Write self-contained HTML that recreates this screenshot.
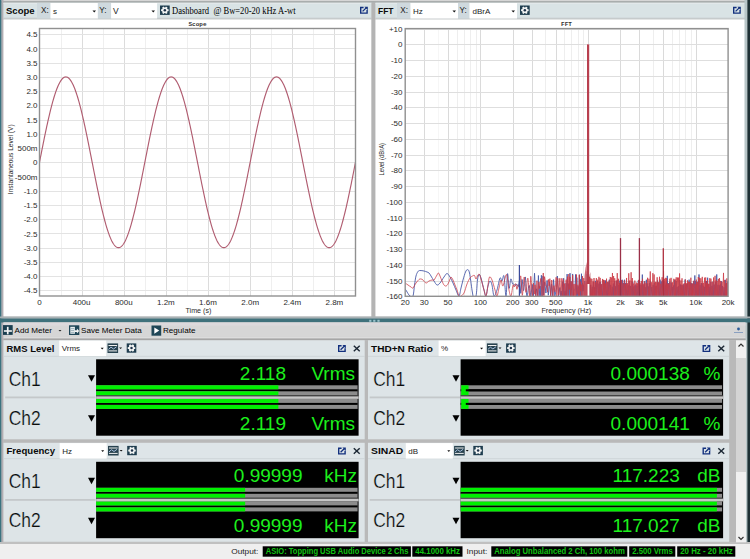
<!DOCTYPE html>
<html><head><meta charset="utf-8"><style>
html,body{margin:0;padding:0;width:750px;height:559px;overflow:hidden;background:#c9c9c9;}
svg{display:block;font-family:"Liberation Sans", sans-serif;}
</style></head><body>
<svg width="750" height="559" viewBox="0 0 750 559">
<rect x="0" y="0" width="750" height="559" fill="#c9c9c9" /><rect x="0" y="0" width="750" height="1" fill="#d6d6d6" /><rect x="0" y="1" width="750" height="1.8" fill="#a9adad" /><rect x="0" y="0" width="1.6" height="542" fill="#3b7380" /><rect x="1.6" y="0" width="1.9" height="542" fill="#b2acb2" /><rect x="3.5" y="2.8" width="368" height="15.7" fill="#d9e3e5" /><rect x="3.5" y="2.8" width="368" height="1.2" fill="#e2e8ea" /><rect x="3.5" y="17.7" width="368" height="1.8" fill="#c6cbcc" /><rect x="3.5" y="19.5" width="368" height="297" fill="#ffffff" /><rect x="371.5" y="3" width="4" height="314" fill="#b4b4b4" /><rect x="375.5" y="2.8" width="370" height="15.7" fill="#d9e3e5" /><rect x="375.5" y="2.8" width="370" height="1.2" fill="#e2e8ea" /><rect x="375.5" y="17.7" width="370" height="1.8" fill="#c6cbcc" /><rect x="375.5" y="19.5" width="370" height="297" fill="#ffffff" /><rect x="744.5" y="0" width="5.5" height="542" fill="#b8c6c8" /><rect x="747.4" y="0" width="2.6" height="542" fill="#1e3034" /><rect x="0" y="316.5" width="750" height="2" fill="#a9b1b4" /><rect x="0" y="318.5" width="750" height="4" fill="#3f717b" /><rect x="3.5" y="322.5" width="742" height="14" fill="#d6d6d6" /><rect x="3.5" y="322.5" width="742" height="3" fill="#dcd9dc" /><rect x="3.5" y="336.5" width="742" height="2" fill="#dcdcdc" /><rect x="3.5" y="338.5" width="742" height="1.8" fill="#a6a6a6" /><rect x="3.5" y="340.3" width="742" height="202" fill="#b9b9b9" /><rect x="0" y="544" width="750" height="15" fill="#efefef" /><rect x="0" y="542" width="750" height="2" fill="#c0c0c0" /><g font-family="Liberation Sans"><text x="6" y="14" font-size="9.4" fill="#0a0a0a" text-anchor="start" font-weight="bold" textLength="28.6" lengthAdjust="spacingAndGlyphs">Scope</text><rect x="37" y="3" width="13.5" height="15.5" fill="#cfd9de" /><text x="41" y="12.8" font-size="8.2" fill="#1a1a1a" text-anchor="start" font-weight="normal" >X:</text><rect x="50.5" y="3" width="47.5" height="15.5" fill="#ffffff" /><text x="53" y="14" font-size="8" fill="#222" text-anchor="start" font-weight="normal" >s</text><path d="M92.5 10.5 h3.5 l-1.75 2z" fill="#111"/><rect x="97.8" y="3" width="13.3" height="15.5" fill="#cfd9de" /><text x="99.3" y="12.8" font-size="8.2" fill="#1a1a1a" text-anchor="start" font-weight="normal" >Y:</text><rect x="111.1" y="3" width="46" height="15.5" fill="#ffffff" /><text x="113" y="14" font-size="8.5" fill="#222" text-anchor="start" font-weight="normal" >V</text><path d="M151.5 10.5 h3.5 l-1.75 2z" fill="#111"/></g><rect x="160" y="5.5" width="9.7" height="9.41" fill="#1f3d4f"/><circle cx="164.85" cy="10.20" r="2.81" fill="#f2f4f4"/><rect x="163.90" y="6.42" width="1.9" height="2" fill="#f2f4f4" transform="rotate(30 164.85 10.20)"/><rect x="163.90" y="6.42" width="1.9" height="2" fill="#f2f4f4" transform="rotate(90 164.85 10.20)"/><rect x="163.90" y="6.42" width="1.9" height="2" fill="#f2f4f4" transform="rotate(150 164.85 10.20)"/><rect x="163.90" y="6.42" width="1.9" height="2" fill="#f2f4f4" transform="rotate(210 164.85 10.20)"/><rect x="163.90" y="6.42" width="1.9" height="2" fill="#f2f4f4" transform="rotate(270 164.85 10.20)"/><rect x="163.90" y="6.42" width="1.9" height="2" fill="#f2f4f4" transform="rotate(330 164.85 10.20)"/><circle cx="164.85" cy="10.20" r="1.26" fill="#1c3048"/><text x="172" y="14" font-size="10" fill="#000" text-anchor="start" font-weight="normal" font-family="Liberation Serif" textLength="37" lengthAdjust="spacingAndGlyphs">Dashboard</text><text x="213.5" y="14" font-size="10" fill="#000" text-anchor="start" font-weight="normal" font-family="Liberation Serif" textLength="82" lengthAdjust="spacingAndGlyphs">@ Bw=20-20 kHz A-wt</text><path d="M363.6 7.5 H360.7 V13.1 H367.1 V10.0" fill="none" stroke="#12307e" stroke-width="1.4"/><path d="M362.6 11.399999999999999 L366.2 7.9" stroke="#12307e" stroke-width="1.3"/><path d="M364.4 6.8 H367.8 V10.2z" fill="#12307e"/><g font-family="Liberation Sans"><text x="378" y="14" font-size="9.4" fill="#0a0a0a" text-anchor="start" font-weight="bold" textLength="15.5" lengthAdjust="spacingAndGlyphs">FFT</text><rect x="397" y="3" width="13.5" height="15.5" fill="#cfd9de" /><text x="400.3" y="12.8" font-size="8.2" fill="#1a1a1a" text-anchor="start" font-weight="normal" >X:</text><rect x="410.5" y="3" width="47.5" height="15.5" fill="#ffffff" /><text x="413" y="14" font-size="8" fill="#222" text-anchor="start" font-weight="normal" >Hz</text><path d="M452.5 10.5 h3.5 l-1.75 2z" fill="#111"/><rect x="458" y="3" width="11.5" height="15.5" fill="#cfd9de" /><text x="459.5" y="12.8" font-size="8.2" fill="#1a1a1a" text-anchor="start" font-weight="normal" >Y:</text><rect x="469.5" y="3" width="47.5" height="15.5" fill="#ffffff" /><text x="472.5" y="14" font-size="8" fill="#222" text-anchor="start" font-weight="normal" >dBrA</text><path d="M511.5 10.5 h3.5 l-1.75 2z" fill="#111"/></g><rect x="520" y="5.5" width="9.7" height="9.41" fill="#1f3d4f"/><circle cx="524.85" cy="10.20" r="2.81" fill="#f2f4f4"/><rect x="523.90" y="6.42" width="1.9" height="2" fill="#f2f4f4" transform="rotate(30 524.85 10.20)"/><rect x="523.90" y="6.42" width="1.9" height="2" fill="#f2f4f4" transform="rotate(90 524.85 10.20)"/><rect x="523.90" y="6.42" width="1.9" height="2" fill="#f2f4f4" transform="rotate(150 524.85 10.20)"/><rect x="523.90" y="6.42" width="1.9" height="2" fill="#f2f4f4" transform="rotate(210 524.85 10.20)"/><rect x="523.90" y="6.42" width="1.9" height="2" fill="#f2f4f4" transform="rotate(270 524.85 10.20)"/><rect x="523.90" y="6.42" width="1.9" height="2" fill="#f2f4f4" transform="rotate(330 524.85 10.20)"/><circle cx="524.85" cy="10.20" r="1.26" fill="#1c3048"/><path d="M736.6 7.5 H733.7 V13.1 H740.1 V10.0" fill="none" stroke="#12307e" stroke-width="1.4"/><path d="M735.6 11.399999999999999 L739.2 7.9" stroke="#12307e" stroke-width="1.3"/><path d="M737.4 6.8 H740.8 V10.2z" fill="#12307e"/><g font-family="Liberation Sans" font-size="8" fill="#2a2a2a"><line x1="61.5" y1="28.5" x2="61.5" y2="296.0" stroke="#efefef" stroke-width="1"/><line x1="82.5" y1="28.5" x2="82.5" y2="296.0" stroke="#dcdcdc" stroke-width="1"/><line x1="103.5" y1="28.5" x2="103.5" y2="296.0" stroke="#efefef" stroke-width="1"/><line x1="124.5" y1="28.5" x2="124.5" y2="296.0" stroke="#dcdcdc" stroke-width="1"/><line x1="145.5" y1="28.5" x2="145.5" y2="296.0" stroke="#efefef" stroke-width="1"/><line x1="166.5" y1="28.5" x2="166.5" y2="296.0" stroke="#dcdcdc" stroke-width="1"/><line x1="187.5" y1="28.5" x2="187.5" y2="296.0" stroke="#efefef" stroke-width="1"/><line x1="208.5" y1="28.5" x2="208.5" y2="296.0" stroke="#dcdcdc" stroke-width="1"/><line x1="229.5" y1="28.5" x2="229.5" y2="296.0" stroke="#efefef" stroke-width="1"/><line x1="250.5" y1="28.5" x2="250.5" y2="296.0" stroke="#dcdcdc" stroke-width="1"/><line x1="271.5" y1="28.5" x2="271.5" y2="296.0" stroke="#efefef" stroke-width="1"/><line x1="292.5" y1="28.5" x2="292.5" y2="296.0" stroke="#dcdcdc" stroke-width="1"/><line x1="313.5" y1="28.5" x2="313.5" y2="296.0" stroke="#efefef" stroke-width="1"/><line x1="334.5" y1="28.5" x2="334.5" y2="296.0" stroke="#dcdcdc" stroke-width="1"/><line x1="39.5" y1="290.5" x2="355.5" y2="290.5" stroke="#e3e3e3" stroke-width="1"/><line x1="39.5" y1="276.5" x2="355.5" y2="276.5" stroke="#e3e3e3" stroke-width="1"/><line x1="39.5" y1="262.5" x2="355.5" y2="262.5" stroke="#e3e3e3" stroke-width="1"/><line x1="39.5" y1="248.5" x2="355.5" y2="248.5" stroke="#e3e3e3" stroke-width="1"/><line x1="39.5" y1="233.5" x2="355.5" y2="233.5" stroke="#e3e3e3" stroke-width="1"/><line x1="39.5" y1="219.5" x2="355.5" y2="219.5" stroke="#e3e3e3" stroke-width="1"/><line x1="39.5" y1="205.5" x2="355.5" y2="205.5" stroke="#e3e3e3" stroke-width="1"/><line x1="39.5" y1="191.5" x2="355.5" y2="191.5" stroke="#e3e3e3" stroke-width="1"/><line x1="39.5" y1="177.5" x2="355.5" y2="177.5" stroke="#e3e3e3" stroke-width="1"/><line x1="39.5" y1="162.5" x2="355.5" y2="162.5" stroke="#e3e3e3" stroke-width="1"/><line x1="39.5" y1="148.5" x2="355.5" y2="148.5" stroke="#e3e3e3" stroke-width="1"/><line x1="39.5" y1="134.5" x2="355.5" y2="134.5" stroke="#e3e3e3" stroke-width="1"/><line x1="39.5" y1="120.5" x2="355.5" y2="120.5" stroke="#e3e3e3" stroke-width="1"/><line x1="39.5" y1="105.5" x2="355.5" y2="105.5" stroke="#e3e3e3" stroke-width="1"/><line x1="39.5" y1="91.5" x2="355.5" y2="91.5" stroke="#e3e3e3" stroke-width="1"/><line x1="39.5" y1="77.5" x2="355.5" y2="77.5" stroke="#e3e3e3" stroke-width="1"/><line x1="39.5" y1="63.5" x2="355.5" y2="63.5" stroke="#e3e3e3" stroke-width="1"/><line x1="39.5" y1="48.5" x2="355.5" y2="48.5" stroke="#e3e3e3" stroke-width="1"/><line x1="39.5" y1="34.5" x2="355.5" y2="34.5" stroke="#e3e3e3" stroke-width="1"/><polyline points="39.50,162.30 40.03,159.62 40.55,156.94 41.08,154.27 41.61,151.60 42.13,148.94 42.66,146.30 43.19,143.67 43.71,141.07 44.24,138.48 44.77,135.92 45.29,133.38 45.82,130.87 46.35,128.39 46.87,125.95 47.40,123.54 47.93,121.17 48.45,118.84 48.98,116.55 49.51,114.31 50.03,112.11 50.56,109.97 51.09,107.88 51.61,105.84 52.14,103.85 52.67,101.93 53.19,100.06 53.72,98.26 54.25,96.51 54.77,94.84 55.30,93.23 55.83,91.68 56.35,90.21 56.88,88.81 57.41,87.48 57.93,86.23 58.46,85.05 58.99,83.94 59.51,82.92 60.04,81.97 60.57,81.10 61.09,80.31 61.62,79.60 62.15,78.98 62.67,78.43 63.20,77.97 63.73,77.59 64.25,77.30 64.78,77.09 65.31,76.96 65.83,76.92 66.36,76.96 66.89,77.09 67.41,77.30 67.94,77.59 68.47,77.97 68.99,78.43 69.52,78.98 70.05,79.60 70.57,80.31 71.10,81.10 71.63,81.97 72.15,82.92 72.68,83.94 73.21,85.05 73.73,86.23 74.26,87.48 74.79,88.81 75.31,90.21 75.84,91.68 76.37,93.23 76.89,94.84 77.42,96.51 77.95,98.26 78.47,100.06 79.00,101.93 79.53,103.85 80.05,105.84 80.58,107.88 81.11,109.97 81.63,112.11 82.16,114.31 82.69,116.55 83.21,118.84 83.74,121.17 84.27,123.54 84.79,125.95 85.32,128.39 85.85,130.87 86.37,133.38 86.90,135.92 87.43,138.48 87.95,141.07 88.48,143.67 89.01,146.30 89.53,148.94 90.06,151.60 90.59,154.27 91.11,156.94 91.64,159.62 92.16,162.30 92.69,164.98 93.22,167.66 93.74,170.33 94.27,173.00 94.80,175.66 95.32,178.30 95.85,180.93 96.38,183.53 96.90,186.12 97.43,188.68 97.96,191.22 98.48,193.73 99.01,196.21 99.54,198.65 100.06,201.06 100.59,203.43 101.12,205.76 101.64,208.05 102.17,210.29 102.70,212.49 103.22,214.63 103.75,216.72 104.28,218.76 104.80,220.75 105.33,222.67 105.86,224.54 106.38,226.34 106.91,228.09 107.44,229.76 107.96,231.37 108.49,232.92 109.02,234.39 109.54,235.79 110.07,237.12 110.60,238.37 111.12,239.55 111.65,240.66 112.18,241.68 112.70,242.63 113.23,243.50 113.76,244.29 114.28,245.00 114.81,245.62 115.34,246.17 115.86,246.63 116.39,247.01 116.92,247.30 117.44,247.51 117.97,247.64 118.50,247.68 119.02,247.64 119.55,247.51 120.08,247.30 120.60,247.01 121.13,246.63 121.66,246.17 122.18,245.62 122.71,245.00 123.24,244.29 123.76,243.50 124.29,242.63 124.82,241.68 125.34,240.66 125.87,239.55 126.40,238.37 126.92,237.12 127.45,235.79 127.98,234.39 128.50,232.92 129.03,231.37 129.56,229.76 130.08,228.09 130.61,226.34 131.14,224.54 131.66,222.67 132.19,220.75 132.72,218.76 133.24,216.72 133.77,214.63 134.30,212.49 134.82,210.29 135.35,208.05 135.88,205.76 136.40,203.43 136.93,201.06 137.46,198.65 137.98,196.21 138.51,193.73 139.04,191.22 139.56,188.68 140.09,186.12 140.62,183.53 141.14,180.93 141.67,178.30 142.20,175.66 142.72,173.00 143.25,170.33 143.78,167.66 144.30,164.98 144.83,162.30 145.36,159.62 145.88,156.94 146.41,154.27 146.94,151.60 147.46,148.94 147.99,146.30 148.52,143.67 149.04,141.07 149.57,138.48 150.10,135.92 150.62,133.38 151.15,130.87 151.68,128.39 152.20,125.95 152.73,123.54 153.26,121.17 153.78,118.84 154.31,116.55 154.84,114.31 155.36,112.11 155.89,109.97 156.42,107.88 156.94,105.84 157.47,103.85 158.00,101.93 158.52,100.06 159.05,98.26 159.58,96.51 160.10,94.84 160.63,93.23 161.16,91.68 161.68,90.21 162.21,88.81 162.74,87.48 163.26,86.23 163.79,85.05 164.32,83.94 164.84,82.92 165.37,81.97 165.90,81.10 166.42,80.31 166.95,79.60 167.48,78.98 168.00,78.43 168.53,77.97 169.06,77.59 169.58,77.30 170.11,77.09 170.64,76.96 171.16,76.92 171.69,76.96 172.22,77.09 172.74,77.30 173.27,77.59 173.80,77.97 174.32,78.43 174.85,78.98 175.38,79.60 175.90,80.31 176.43,81.10 176.96,81.97 177.48,82.92 178.01,83.94 178.54,85.05 179.06,86.23 179.59,87.48 180.12,88.81 180.64,90.21 181.17,91.68 181.70,93.23 182.22,94.84 182.75,96.51 183.28,98.26 183.80,100.06 184.33,101.93 184.86,103.85 185.38,105.84 185.91,107.88 186.44,109.97 186.96,112.11 187.49,114.31 188.02,116.55 188.54,118.84 189.07,121.17 189.60,123.54 190.12,125.95 190.65,128.39 191.18,130.87 191.70,133.38 192.23,135.92 192.76,138.48 193.28,141.07 193.81,143.67 194.34,146.30 194.86,148.94 195.39,151.60 195.92,154.27 196.44,156.94 196.97,159.62 197.50,162.30 198.02,164.98 198.55,167.66 199.07,170.33 199.60,173.00 200.13,175.66 200.65,178.30 201.18,180.93 201.71,183.53 202.23,186.12 202.76,188.68 203.29,191.22 203.81,193.73 204.34,196.21 204.87,198.65 205.39,201.06 205.92,203.43 206.45,205.76 206.97,208.05 207.50,210.29 208.03,212.49 208.55,214.63 209.08,216.72 209.61,218.76 210.13,220.75 210.66,222.67 211.19,224.54 211.71,226.34 212.24,228.09 212.77,229.76 213.29,231.37 213.82,232.92 214.35,234.39 214.87,235.79 215.40,237.12 215.93,238.37 216.45,239.55 216.98,240.66 217.51,241.68 218.03,242.63 218.56,243.50 219.09,244.29 219.61,245.00 220.14,245.62 220.67,246.17 221.19,246.63 221.72,247.01 222.25,247.30 222.77,247.51 223.30,247.64 223.83,247.68 224.35,247.64 224.88,247.51 225.41,247.30 225.93,247.01 226.46,246.63 226.99,246.17 227.51,245.62 228.04,245.00 228.57,244.29 229.09,243.50 229.62,242.63 230.15,241.68 230.67,240.66 231.20,239.55 231.73,238.37 232.25,237.12 232.78,235.79 233.31,234.39 233.83,232.92 234.36,231.37 234.89,229.76 235.41,228.09 235.94,226.34 236.47,224.54 236.99,222.67 237.52,220.75 238.05,218.76 238.57,216.72 239.10,214.63 239.63,212.49 240.15,210.29 240.68,208.05 241.21,205.76 241.73,203.43 242.26,201.06 242.79,198.65 243.31,196.21 243.84,193.73 244.37,191.22 244.89,188.68 245.42,186.12 245.95,183.53 246.47,180.93 247.00,178.30 247.53,175.66 248.05,173.00 248.58,170.33 249.11,167.66 249.63,164.98 250.16,162.30 250.69,159.62 251.21,156.94 251.74,154.27 252.27,151.60 252.79,148.94 253.32,146.30 253.85,143.67 254.37,141.07 254.90,138.48 255.43,135.92 255.95,133.38 256.48,130.87 257.01,128.39 257.53,125.95 258.06,123.54 258.59,121.17 259.11,118.84 259.64,116.55 260.17,114.31 260.69,112.11 261.22,109.97 261.75,107.88 262.27,105.84 262.80,103.85 263.33,101.93 263.85,100.06 264.38,98.26 264.91,96.51 265.43,94.84 265.96,93.23 266.49,91.68 267.01,90.21 267.54,88.81 268.07,87.48 268.59,86.23 269.12,85.05 269.65,83.94 270.17,82.92 270.70,81.97 271.23,81.10 271.75,80.31 272.28,79.60 272.81,78.98 273.33,78.43 273.86,77.97 274.39,77.59 274.91,77.30 275.44,77.09 275.97,76.96 276.49,76.92 277.02,76.96 277.55,77.09 278.07,77.30 278.60,77.59 279.13,77.97 279.65,78.43 280.18,78.98 280.71,79.60 281.23,80.31 281.76,81.10 282.29,81.97 282.81,82.92 283.34,83.94 283.87,85.05 284.39,86.23 284.92,87.48 285.45,88.81 285.97,90.21 286.50,91.68 287.03,93.23 287.55,94.84 288.08,96.51 288.61,98.26 289.13,100.06 289.66,101.93 290.19,103.85 290.71,105.84 291.24,107.88 291.77,109.97 292.29,112.11 292.82,114.31 293.35,116.55 293.87,118.84 294.40,121.17 294.93,123.54 295.45,125.95 295.98,128.39 296.51,130.87 297.03,133.38 297.56,135.92 298.09,138.48 298.61,141.07 299.14,143.67 299.67,146.30 300.19,148.94 300.72,151.60 301.25,154.27 301.77,156.94 302.30,159.62 302.82,162.30 303.35,164.98 303.88,167.66 304.40,170.33 304.93,173.00 305.46,175.66 305.98,178.30 306.51,180.93 307.04,183.53 307.56,186.12 308.09,188.68 308.62,191.22 309.14,193.73 309.67,196.21 310.20,198.65 310.72,201.06 311.25,203.43 311.78,205.76 312.30,208.05 312.83,210.29 313.36,212.49 313.88,214.63 314.41,216.72 314.94,218.76 315.46,220.75 315.99,222.67 316.52,224.54 317.04,226.34 317.57,228.09 318.10,229.76 318.62,231.37 319.15,232.92 319.68,234.39 320.20,235.79 320.73,237.12 321.26,238.37 321.78,239.55 322.31,240.66 322.84,241.68 323.36,242.63 323.89,243.50 324.42,244.29 324.94,245.00 325.47,245.62 326.00,246.17 326.52,246.63 327.05,247.01 327.58,247.30 328.10,247.51 328.63,247.64 329.16,247.68 329.68,247.64 330.21,247.51 330.74,247.30 331.26,247.01 331.79,246.63 332.32,246.17 332.84,245.62 333.37,245.00 333.90,244.29 334.42,243.50 334.95,242.63 335.48,241.68 336.00,240.66 336.53,239.55 337.06,238.37 337.58,237.12 338.11,235.79 338.64,234.39 339.16,232.92 339.69,231.37 340.22,229.76 340.74,228.09 341.27,226.34 341.80,224.54 342.32,222.67 342.85,220.75 343.38,218.76 343.90,216.72 344.43,214.63 344.96,212.49 345.48,210.29 346.01,208.05 346.54,205.76 347.06,203.43 347.59,201.06 348.12,198.65 348.64,196.21 349.17,193.73 349.70,191.22 350.22,188.68 350.75,186.12 351.28,183.53 351.80,180.93 352.33,178.30 352.86,175.66 353.38,173.00 353.91,170.33 354.44,167.66 354.96,164.98 355.49,162.30" fill="none" stroke="#b05c70" stroke-width="1.15"/><rect x="39.5" y="28.5" width="316.0" height="267.5" fill="none" stroke="#909090" stroke-width="1.4"/><text x="37.5" y="293.4" text-anchor="end">-4.5</text><text x="37.5" y="279.1" text-anchor="end">-4.0</text><text x="37.5" y="264.9" text-anchor="end">-3.5</text><text x="37.5" y="250.7" text-anchor="end">-3.0</text><text x="37.5" y="236.5" text-anchor="end">-2.5</text><text x="37.5" y="222.2" text-anchor="end">-2.0</text><text x="37.5" y="208.0" text-anchor="end">-1.5</text><text x="37.5" y="193.8" text-anchor="end">-1.0</text><text x="37.5" y="179.5" text-anchor="end">-500m</text><text x="37.5" y="165.3" text-anchor="end">0</text><text x="37.5" y="151.1" text-anchor="end">500m</text><text x="37.5" y="136.8" text-anchor="end">1.0</text><text x="37.5" y="122.6" text-anchor="end">1.5</text><text x="37.5" y="108.4" text-anchor="end">2.0</text><text x="37.5" y="94.2" text-anchor="end">2.5</text><text x="37.5" y="79.9" text-anchor="end">3.0</text><text x="37.5" y="65.7" text-anchor="end">3.5</text><text x="37.5" y="51.5" text-anchor="end">4.0</text><text x="37.5" y="37.2" text-anchor="end">4.5</text><text x="39.5" y="304.7" text-anchor="middle">0</text><text x="81.6" y="304.7" text-anchor="middle">400u</text><text x="123.8" y="304.7" text-anchor="middle">800u</text><text x="165.9" y="304.7" text-anchor="middle">1.2m</text><text x="208.0" y="304.7" text-anchor="middle">1.6m</text><text x="250.2" y="304.7" text-anchor="middle">2.0m</text><text x="292.3" y="304.7" text-anchor="middle">2.4m</text><text x="334.4" y="304.7" text-anchor="middle">2.8m</text><text x="198.4" y="312.8" text-anchor="middle" font-size="7.8" textLength="25.8" lengthAdjust="spacingAndGlyphs">Time (s)</text><text transform="translate(13,159.3) rotate(-90)" text-anchor="middle" font-size="7.4" textLength="69.8" lengthAdjust="spacingAndGlyphs">Instantaneous Level (V)</text><text x="197.5" y="25.6" text-anchor="middle" font-family='"Liberation Mono", monospace' font-size="6" font-weight="bold" fill="#333">Scope</text><line x1="424.5" y1="28.6" x2="424.5" y2="296.3" stroke="#dadada" stroke-width="1"/><line x1="438.5" y1="28.6" x2="438.5" y2="296.3" stroke="#f6f6f6" stroke-width="1"/><line x1="448.5" y1="28.6" x2="448.5" y2="296.3" stroke="#dadada" stroke-width="1"/><line x1="457.5" y1="28.6" x2="457.5" y2="296.3" stroke="#eeeeee" stroke-width="1"/><line x1="464.5" y1="28.6" x2="464.5" y2="296.3" stroke="#eeeeee" stroke-width="1"/><line x1="470.5" y1="28.6" x2="470.5" y2="296.3" stroke="#eeeeee" stroke-width="1"/><line x1="476.5" y1="28.6" x2="476.5" y2="296.3" stroke="#eeeeee" stroke-width="1"/><line x1="480.5" y1="28.6" x2="480.5" y2="296.3" stroke="#dadada" stroke-width="1"/><line x1="513.5" y1="28.6" x2="513.5" y2="296.3" stroke="#dadada" stroke-width="1"/><line x1="532.5" y1="28.6" x2="532.5" y2="296.3" stroke="#dadada" stroke-width="1"/><line x1="545.5" y1="28.6" x2="545.5" y2="296.3" stroke="#eeeeee" stroke-width="1"/><line x1="556.5" y1="28.6" x2="556.5" y2="296.3" stroke="#dadada" stroke-width="1"/><line x1="564.5" y1="28.6" x2="564.5" y2="296.3" stroke="#eeeeee" stroke-width="1"/><line x1="571.5" y1="28.6" x2="571.5" y2="296.3" stroke="#eeeeee" stroke-width="1"/><line x1="578.5" y1="28.6" x2="578.5" y2="296.3" stroke="#eeeeee" stroke-width="1"/><line x1="583.5" y1="28.6" x2="583.5" y2="296.3" stroke="#eeeeee" stroke-width="1"/><line x1="588.5" y1="28.6" x2="588.5" y2="296.3" stroke="#dadada" stroke-width="1"/><line x1="620.5" y1="28.6" x2="620.5" y2="296.3" stroke="#dadada" stroke-width="1"/><line x1="639.5" y1="28.6" x2="639.5" y2="296.3" stroke="#dadada" stroke-width="1"/><line x1="653.5" y1="28.6" x2="653.5" y2="296.3" stroke="#eeeeee" stroke-width="1"/><line x1="663.5" y1="28.6" x2="663.5" y2="296.3" stroke="#dadada" stroke-width="1"/><line x1="672.5" y1="28.6" x2="672.5" y2="296.3" stroke="#eeeeee" stroke-width="1"/><line x1="679.5" y1="28.6" x2="679.5" y2="296.3" stroke="#eeeeee" stroke-width="1"/><line x1="685.5" y1="28.6" x2="685.5" y2="296.3" stroke="#eeeeee" stroke-width="1"/><line x1="691.5" y1="28.6" x2="691.5" y2="296.3" stroke="#eeeeee" stroke-width="1"/><line x1="696.5" y1="28.6" x2="696.5" y2="296.3" stroke="#dadada" stroke-width="1"/><line x1="405.2" y1="29.5" x2="728.1" y2="29.5" stroke="#dedede" stroke-width="1"/><line x1="405.2" y1="44.5" x2="728.1" y2="44.5" stroke="#dedede" stroke-width="1"/><line x1="405.2" y1="60.5" x2="728.1" y2="60.5" stroke="#dedede" stroke-width="1"/><line x1="405.2" y1="76.5" x2="728.1" y2="76.5" stroke="#dedede" stroke-width="1"/><line x1="405.2" y1="92.5" x2="728.1" y2="92.5" stroke="#dedede" stroke-width="1"/><line x1="405.2" y1="107.5" x2="728.1" y2="107.5" stroke="#dedede" stroke-width="1"/><line x1="405.2" y1="123.5" x2="728.1" y2="123.5" stroke="#dedede" stroke-width="1"/><line x1="405.2" y1="139.5" x2="728.1" y2="139.5" stroke="#dedede" stroke-width="1"/><line x1="405.2" y1="155.5" x2="728.1" y2="155.5" stroke="#dedede" stroke-width="1"/><line x1="405.2" y1="170.5" x2="728.1" y2="170.5" stroke="#dedede" stroke-width="1"/><line x1="405.2" y1="186.5" x2="728.1" y2="186.5" stroke="#dedede" stroke-width="1"/><line x1="405.2" y1="202.5" x2="728.1" y2="202.5" stroke="#dedede" stroke-width="1"/><line x1="405.2" y1="218.5" x2="728.1" y2="218.5" stroke="#dedede" stroke-width="1"/><line x1="405.2" y1="233.5" x2="728.1" y2="233.5" stroke="#dedede" stroke-width="1"/><line x1="405.2" y1="249.5" x2="728.1" y2="249.5" stroke="#dedede" stroke-width="1"/><line x1="405.2" y1="265.5" x2="728.1" y2="265.5" stroke="#dedede" stroke-width="1"/><line x1="405.2" y1="281.5" x2="728.1" y2="281.5" stroke="#dedede" stroke-width="1"/><line x1="405.2" y1="296.5" x2="728.1" y2="296.5" stroke="#dedede" stroke-width="1"/><clipPath id="fftclip"><rect x="405.2" y="28.6" width="322.9" height="268.0"/></clipPath><path d="M405.20,289.00L406.40,290.80C406.87,291.55 407.40,292.63 408.00,293.50C408.60,294.37 409.17,295.58 410.00,296.00C410.83,296.42 412.25,297.83 413.00,296.00C413.75,294.17 414.00,288.33 414.50,285.00C415.00,281.67 415.42,278.25 416.00,276.00C416.58,273.75 417.33,272.42 418.00,271.50C418.67,270.58 419.00,270.58 420.00,270.50C421.00,270.42 422.83,270.75 424.00,271.00C425.17,271.25 426.17,271.67 427.00,272.00C427.83,272.33 428.33,272.33 429.00,273.00C429.67,273.67 430.17,274.67 431.00,276.00C431.83,277.33 433.00,279.50 434.00,281.00C435.00,282.50 436.00,284.67 437.00,285.00C438.00,285.33 438.83,284.33 440.00,283.00C441.17,281.67 442.83,278.58 444.00,277.00C445.17,275.42 446.00,273.50 447.00,273.50C448.00,273.50 449.00,275.42 450.00,277.00C451.00,278.58 452.00,280.83 453.00,283.00C454.00,285.17 455.00,287.83 456.00,290.00C457.00,292.17 458.17,296.33 459.00,296.00C459.83,295.67 460.33,290.67 461.00,288.00C461.67,285.33 462.25,282.67 463.00,280.00C463.75,277.33 464.75,273.73 465.50,272.00C466.25,270.27 466.83,269.43 467.50,269.60C468.17,269.77 468.75,269.60 469.50,273.00C470.25,276.40 471.42,286.17 472.00,290.00L473.00,296.00C473.67,297.00 475.25,298.67 476.00,296.00C476.75,293.33 477.00,283.58 477.50,280.00C478.00,276.42 478.42,274.83 479.00,274.50C479.58,274.17 480.17,275.42 481.00,278.00C481.83,280.58 483.17,287.00 484.00,290.00C484.83,293.00 485.33,296.67 486.00,296.00C486.67,295.33 487.33,288.50 488.00,286.00C488.67,283.50 489.33,281.17 490.00,281.00C490.67,280.83 491.33,282.50 492.00,285.00C492.67,287.50 493.17,295.17 494.00,296.00C494.83,296.83 496.00,293.00 497.00,290.00C498.00,287.00 499.17,279.50 500.00,278.00C500.83,276.50 501.33,281.33 502.00,281.00C502.67,280.67 503.33,273.50 504.00,276.00C504.67,278.50 505.41,296.39 506.00,296.00C506.59,295.61 507.03,274.95 507.54,273.68C508.06,272.41 508.56,287.49 509.10,288.35C509.65,289.22 510.23,279.62 510.81,278.87C511.38,278.13 512.08,282.98 512.56,283.86L513.68,284.18C514.19,284.44 515.14,285.44 515.65,285.43L516.70,284.08C517.17,284.29 517.99,287.56 518.48,286.65L519.67,278.67L520.74,293.35L522.03,279.48C522.50,279.02 523.01,291.04 523.56,290.63C524.11,290.21 524.78,276.02 525.33,276.98C525.88,277.93 526.25,294.97 526.88,296.35C527.50,297.73 528.40,285.26 529.08,285.26C529.75,285.26 530.40,296.49 530.92,296.35L532.20,284.44L533.34,296.35L534.53,273.25L535.72,296.35L536.47,288.76L537.76,296.35L538.41,275.52L539.20,296.35L540.03,286.04L540.71,296.35L541.38,275.28L542.11,296.35L543.02,276.10L543.71,295.07L544.61,281.93L545.89,293.00L547.10,280.36L548.30,295.24L549.60,282.07L550.74,296.35L551.54,284.19L552.55,296.35L553.57,279.61L554.84,296.35L555.85,291.47L556.55,287.33L557.33,276.01L558.59,296.35L559.85,287.50L560.75,296.35L561.17,290.95L561.92,296.35L562.73,281.63L563.22,296.35L563.65,278.28L564.48,296.35L565.02,291.27L565.43,296.35L566.05,283.10L566.63,296.35L567.10,274.10L567.99,296.35L568.74,283.56L569.15,296.35L570.01,273.19L570.42,296.35L571.06,281.31L571.96,296.35L572.63,273.98L573.40,296.35L574.20,289.88L574.94,289.49L575.55,274.45L576.24,296.35L576.83,277.65L577.27,296.35L578.16,286.32L578.76,296.35L579.45,274.76L579.89,296.35L580.31,279.26L580.82,296.35L581.47,273.73L582.00,296.35L582.55,282.77L583.03,291.15L583.65,284.80L584.30,296.35L584.74,281.03L585.50,296.35L586.25,282.78L586.74,296.35L587.15,273.99L587.89,296.35L588.56,273.99L588.98,296.35L589.53,285.69L590.07,296.35L590.70,284.89L591.43,296.35L592.22,286.78L592.59,296.35L593.33,281.79L593.94,296.35L594.42,287.22L594.84,296.35L595.39,280.84L595.85,296.35L596.26,282.42L596.81,296.35L597.44,281.01L598.23,296.35L598.88,283.63L599.31,296.35L599.67,281.75L600.10,296.35L600.57,281.88L601.16,296.35L601.78,284.27L602.49,296.35L603.25,280.03L603.92,296.35L604.33,282.45L605.09,296.35L605.61,280.45L606.32,296.35L607.09,282.24L607.54,296.35L608.21,282.32L608.88,296.35L609.33,279.65L610.12,296.35L610.71,284.85L611.47,296.35L612.21,286.72L612.75,296.35L613.35,283.53L613.71,296.35L614.43,281.07L614.86,296.35L615.36,286.27L615.77,296.35L616.36,280.76L617.02,296.35L617.79,279.90L618.18,296.35L618.63,285.09L619.31,296.35L619.95,280.73L620.55,296.35L621.04,280.72L621.79,296.35L622.24,279.75L622.82,296.35L623.43,283.15L624.01,296.35L624.63,279.74L625.21,296.35L625.74,282.94L626.31,296.35L626.97,283.13L627.51,296.35L628.29,285.25L628.85,296.35L629.26,280.95L630.02,296.35L630.58,285.86L631.21,296.35L631.98,281.24L632.34,296.35L632.77,281.96L633.27,296.35L633.78,286.55L634.46,296.35L634.86,285.40L635.30,296.35L635.89,284.41L636.43,296.35L637.01,285.76L637.65,296.35L638.28,280.67L638.91,296.35L639.65,281.54L640.36,296.35L641.12,284.89L641.88,296.35L642.33,274.60L642.74,296.35L643.20,285.33L643.59,296.35L644.32,281.15L644.72,296.35L645.25,287.23L645.69,296.35L646.35,279.75L646.75,296.35L647.33,283.41L647.99,296.35L648.42,286.54L648.79,296.35L649.39,282.89L649.81,296.35L650.24,280.76L651.03,296.35L651.80,286.88L652.58,296.35L653.14,284.80L653.70,296.35L654.28,282.64L654.64,296.35L655.30,285.95L655.86,296.35L656.54,285.84L656.96,296.35L657.54,280.34L658.25,296.35L658.92,282.42L659.45,296.35L660.07,279.63L660.78,296.35L661.25,281.51L661.95,296.35L662.67,280.31L663.41,296.35L664.08,281.35L664.61,296.35L665.28,284.68L665.85,296.35L666.20,282.34L666.83,296.35L667.29,275.83L667.79,296.35L668.43,283.17L668.96,296.35L669.76,281.85L670.45,296.35L671.24,282.53L671.93,296.35L672.39,286.98L672.83,296.35L673.35,285.40L674.11,296.35L674.70,279.76L675.31,296.35L676.11,281.00L676.49,296.35L677.11,287.02L677.88,296.35L678.30,286.04L678.87,296.35L679.50,279.93L680.04,296.35L680.62,284.49L681.10,296.35L681.75,285.14L682.42,296.35L682.90,285.44L683.27,296.35L683.69,284.30L684.45,296.35L685.13,279.59L685.91,296.35L686.29,283.99L686.86,296.35L687.65,283.25L688.42,296.35L689.09,279.66L689.81,296.35L690.43,282.46L690.99,296.35L691.43,283.21L691.83,296.35L692.38,283.79L692.85,296.35L693.46,281.25L694.05,296.35L694.85,275.45L695.31,296.35L695.71,281.20L696.34,296.35L696.85,281.98L697.46,296.35L698.07,281.44L698.51,296.35L698.97,274.45L699.72,296.35L700.08,285.24L700.62,296.35L701.26,283.11L701.64,296.35L702.03,283.04L702.66,296.35L703.18,285.71L703.68,296.35L704.37,286.79L704.77,296.35L705.49,281.32L705.93,296.35L706.47,280.99L706.99,296.35L707.63,277.70L708.23,296.35L708.92,284.00L709.43,296.35L709.83,286.75L710.21,296.35L710.82,281.98L711.30,296.35L712.00,285.69L712.65,296.35L713.04,281.66L713.70,296.35L714.18,284.55L714.85,296.35L715.37,281.79L715.97,296.35L716.74,274.46L717.28,296.35L717.99,284.87L718.52,296.35L719.30,285.42L719.81,296.35L720.32,284.26L720.85,296.35L721.28,281.10L721.88,296.35L722.60,285.98L723.30,296.35L724.04,287.20L724.62,296.35L725.22,279.76L725.86,296.35L726.57,283.07L727.28,296.35L727.67,281.57L728.10,296.35" fill="none" stroke="#4a5aa8" stroke-width="0.9" stroke-opacity="1" stroke-linejoin="bevel" clip-path="url(#fftclip)"/><path d="M405.20,283.00C405.67,283.33 407.03,284.33 408.00,285.00C408.97,285.67 410.17,286.50 411.00,287.00C411.83,287.50 412.17,288.67 413.00,288.00C413.83,287.33 415.00,284.42 416.00,283.00C417.00,281.58 418.17,280.17 419.00,279.50C419.83,278.83 420.33,278.92 421.00,279.00C421.67,279.08 422.17,279.33 423.00,280.00C423.83,280.67 425.00,282.83 426.00,283.00C427.00,283.17 428.00,281.50 429.00,281.00C430.00,280.50 431.17,280.17 432.00,280.00C432.83,279.83 433.17,280.83 434.00,280.00C434.83,279.17 436.25,276.17 437.00,275.00C437.75,273.83 438.00,272.83 438.50,273.00C439.00,273.17 439.42,274.67 440.00,276.00C440.58,277.33 441.33,279.50 442.00,281.00C442.67,282.50 443.33,284.17 444.00,285.00C444.67,285.83 445.33,286.17 446.00,286.00C446.67,285.83 447.33,285.17 448.00,284.00C448.67,282.83 449.50,280.17 450.00,279.00L451.00,277.00C451.50,277.17 452.33,278.67 453.00,280.00C453.67,281.33 454.33,283.33 455.00,285.00C455.67,286.67 456.33,288.17 457.00,290.00C457.67,291.83 458.33,295.00 459.00,296.00C459.67,297.00 460.17,296.50 461.00,296.00C461.83,295.50 463.00,295.00 464.00,293.00C465.00,291.00 466.00,286.50 467.00,284.00C468.00,281.50 469.08,279.33 470.00,278.00C470.92,276.67 471.75,276.42 472.50,276.00C473.25,275.58 473.92,275.00 474.50,275.50C475.08,276.00 475.42,279.08 476.00,279.00C476.58,278.92 477.42,275.75 478.00,275.00C478.58,274.25 479.00,273.83 479.50,274.50C480.00,275.17 480.25,276.42 481.00,279.00C481.75,281.58 483.17,287.17 484.00,290.00C484.83,292.83 485.33,296.83 486.00,296.00C486.67,295.17 487.42,288.17 488.00,285.00C488.58,281.83 488.83,277.83 489.50,277.00C490.17,276.17 491.08,277.83 492.00,280.00C492.92,282.17 494.17,287.33 495.00,290.00C495.83,292.67 496.33,296.33 497.00,296.00C497.67,295.67 498.33,290.67 499.00,288.00C499.67,285.33 500.33,280.33 501.00,280.00C501.67,279.67 502.08,286.92 503.00,286.00C503.92,285.08 505.50,273.83 506.50,274.50C507.50,275.17 508.25,286.42 509.00,290.00C509.75,293.58 510.32,296.87 511.00,296.00C511.68,295.13 512.57,286.26 513.11,284.77L514.21,287.03C514.64,286.85 515.26,283.30 515.72,283.68L516.95,289.35L518.21,285.01L519.32,285.17C519.75,283.68 520.33,274.36 520.82,276.07L522.25,295.44C522.82,295.60 523.58,277.55 524.19,277.04C524.81,276.52 525.33,292.17 525.94,292.35C526.55,292.53 527.23,277.45 527.85,278.12C528.47,278.78 529.16,296.66 529.64,296.35L530.75,276.28C531.21,276.28 531.99,295.22 532.45,296.35L533.50,283.08L534.33,294.19L535.01,284.83L535.80,296.35L536.98,280.67L537.78,296.35L538.92,282.07L539.60,288.55L540.78,278.45L542.02,296.35L543.28,273.04L543.92,296.35L544.54,276.67L545.82,285.89L546.80,286.12L547.64,292.19L548.38,279.45L549.11,285.87L549.86,278.66L550.58,296.35L551.75,280.01L552.98,296.35L553.82,285.51L555.05,291.80L556.13,277.27L556.90,296.35L557.79,278.31L558.77,295.15L559.82,278.28L561.00,296.35L561.88,278.24L562.55,296.35L563.23,279.66L563.99,296.35L564.57,283.54L565.41,296.35L566.15,279.66L566.76,296.35L567.51,276.64L568.18,296.35L568.84,274.00L569.29,289.55L569.93,276.84L570.64,296.35L571.20,281.52L572.08,296.35L572.67,275.04L573.31,296.35L573.84,284.20L574.35,296.35L575.17,283.93L575.80,296.35L576.49,274.51L577.02,294.40L577.91,284.79L578.71,296.35L579.29,274.77L579.74,296.35L580.34,281.63L580.77,291.19L581.26,284.58L581.75,296.35L582.46,276.10L583.09,296.35L583.78,278.07L584.40,296.35L585.01,283.48L585.40,296.35L586.14,281.18L586.63,296.35L587.26,271.15L587.81,296.35L588.32,271.15L589.09,296.35L589.58,276.81L590.37,296.35L590.78,278.44L591.50,296.35L591.87,278.83L592.56,296.35L593.15,281.33L593.53,296.35L594.02,278.06L594.63,296.35L595.17,282.05L595.82,296.35L596.37,278.07L596.98,296.35L597.77,279.63L598.31,296.35L598.93,276.81L599.58,296.35L600.13,277.92L600.65,296.35L601.17,284.27L601.70,296.35L602.49,278.96L603.14,296.35L603.61,279.79L603.99,296.35L604.60,280.27L605.01,296.35L605.39,283.39L606.03,296.35L606.52,278.63L607.14,296.35L607.73,281.80L608.52,296.35L608.99,280.65L609.59,296.35L610.29,276.96L610.65,296.35L611.36,277.44L611.78,296.35L612.44,272.99L612.84,296.35L613.60,276.05L614.32,296.35L614.71,278.27L615.38,296.35L616.16,280.51L616.64,296.35L617.24,273.10L617.99,296.35L618.43,278.77L618.81,296.35L619.53,282.83L619.91,296.35L620.55,276.85L620.90,296.35L621.62,280.05L622.23,296.35L622.94,283.44L623.64,296.35L624.15,280.50L624.91,296.35L625.45,283.89L625.94,296.35L626.59,277.98L627.04,296.35L627.75,283.41L628.16,296.35L628.78,273.28L629.32,296.35L629.90,280.42L630.49,296.35L631.10,272.25L631.83,296.35L632.30,278.06L632.98,296.35L633.75,283.53L634.33,296.35L634.84,280.59L635.64,296.35L636.33,282.59L636.85,296.35L637.60,283.28L638.19,296.35L638.66,279.87L639.45,296.35L640.15,283.34L640.75,296.35L641.39,281.02L641.76,296.35L642.53,278.72L643.09,296.35L643.79,283.81L644.33,296.35L644.90,281.36L645.55,296.35L646.07,283.17L646.81,296.35L647.59,277.78L648.29,296.35L648.95,278.77L649.65,296.35L650.28,271.44L650.92,296.35L651.68,282.19L652.27,296.35L652.86,273.16L653.49,296.35L654.11,274.46L654.80,296.35L655.42,281.87L655.84,296.35L656.19,282.17L656.58,296.35L657.15,277.25L657.85,296.35L658.50,282.37L658.90,296.35L659.52,276.78L660.07,296.35L660.81,283.80L661.45,296.35L662.11,277.24L662.90,296.35L663.55,271.24L663.97,296.35L664.65,278.77L665.15,296.35L665.75,277.84L666.12,296.35L666.64,278.30L667.04,296.35L667.42,283.62L667.97,296.35L668.71,283.74L669.36,296.35L669.86,278.65L670.41,296.35L671.09,277.83L671.78,296.35L672.54,282.32L673.12,296.35L673.81,278.79L674.54,296.35L675.27,279.49L675.63,296.35L676.20,277.34L676.93,296.35L677.48,277.56L678.12,296.35L678.56,277.62L679.17,296.35L679.57,273.43L680.26,296.35L680.97,280.42L681.40,296.35L682.03,278.32L682.43,296.35L682.87,284.53L683.40,296.35L684.19,283.12L684.91,296.35L685.36,279.52L685.85,296.35L686.29,283.15L686.72,296.35L687.48,280.28L687.93,296.35L688.60,281.61L689.28,296.35L689.65,281.97L690.21,296.35L690.85,277.72L691.32,296.35L692.02,283.80L692.45,296.35L692.84,283.44L693.23,296.35L693.96,280.63L694.54,296.35L695.26,284.18L695.91,296.35L696.26,279.62L696.99,296.35L697.34,282.07L697.95,296.35L698.32,277.00L698.92,296.35L699.57,277.89L700.28,296.35L700.85,278.28L701.58,296.35L702.25,276.86L702.88,296.35L703.37,282.77L703.83,296.35L704.58,277.69L705.11,296.35L705.72,277.43L706.17,296.35L706.56,282.77L707.10,296.35L707.50,280.07L707.88,296.35L708.35,283.79L709.06,296.35L709.81,278.18L710.24,296.35L710.92,278.67L711.69,296.35L712.16,281.86L712.89,296.35L713.60,277.44L714.28,296.35L715.06,275.79L715.74,296.35L716.10,280.31L716.55,296.35L717.00,280.92L717.76,296.35L718.37,278.87L718.81,296.35L719.52,278.13L720.07,296.35L720.67,280.93L721.31,296.35L722.08,281.87L722.77,296.35L723.51,272.91L724.01,296.35L724.75,280.07L725.31,296.35L726.05,282.96L726.48,296.35L726.85,278.37L727.36,296.35L727.81,283.00" fill="none" stroke="#cc3a44" stroke-width="0.9" stroke-opacity="0.85" stroke-linejoin="bevel" clip-path="url(#fftclip)"/><line x1="519.4" y1="264.9" x2="519.4" y2="296.3" stroke="#3a4a9a" stroke-width="1.2"/><rect x="587.2" y="284" width="2.4" height="12.3" fill="#ffffff"/><line x1="588.1" y1="44.4" x2="588.1" y2="284" stroke="#b8404f" stroke-width="2.2"/><path d="M586.8 296.3 L586.8 270 L587.4 283 L587.4 296.3z" fill="#c04050"/><path d="M589.6 296.3 L589.6 276 L590.3 272 L590.4 296.3z" fill="#b03a48"/><path d="M584 296.3 L584.5 276 L585.5 268 L586.8 262 L586.8 296.3z" fill="#c85060" fill-opacity="0.85"/><line x1="620.5" y1="238.1" x2="620.5" y2="296.3" stroke="#9a3048" stroke-width="1.3"/><line x1="639.4" y1="238.1" x2="639.4" y2="296.3" stroke="#9a3048" stroke-width="1.3"/><line x1="663.3" y1="248.3" x2="663.3" y2="296.3" stroke="#b03040" stroke-width="1.3"/><rect x="405.2" y="28.6" width="322.9" height="267.7" fill="none" stroke="#909090" stroke-width="1.4"/><text x="402.5" y="31.6" text-anchor="end">+10</text><text x="402.5" y="47.4" text-anchor="end">0</text><text x="402.5" y="63.1" text-anchor="end">-10</text><text x="402.5" y="78.8" text-anchor="end">-20</text><text x="402.5" y="94.6" text-anchor="end">-30</text><text x="402.5" y="110.3" text-anchor="end">-40</text><text x="402.5" y="126.1" text-anchor="end">-50</text><text x="402.5" y="141.8" text-anchor="end">-60</text><text x="402.5" y="157.6" text-anchor="end">-70</text><text x="402.5" y="173.3" text-anchor="end">-80</text><text x="402.5" y="189.1" text-anchor="end">-90</text><text x="402.5" y="204.8" text-anchor="end">-100</text><text x="402.5" y="220.6" text-anchor="end">-110</text><text x="402.5" y="236.3" text-anchor="end">-120</text><text x="402.5" y="252.1" text-anchor="end">-130</text><text x="402.5" y="267.9" text-anchor="end">-140</text><text x="402.5" y="283.6" text-anchor="end">-150</text><text x="402.5" y="299.4" text-anchor="end">-160</text><text x="405.2" y="304.7" text-anchor="middle">20</text><text x="424.2" y="304.7" text-anchor="middle">30</text><text x="448.0" y="304.7" text-anchor="middle">50</text><text x="480.4" y="304.7" text-anchor="middle">100</text><text x="512.8" y="304.7" text-anchor="middle">200</text><text x="531.8" y="304.7" text-anchor="middle">300</text><text x="555.7" y="304.7" text-anchor="middle">500</text><text x="588.1" y="304.7" text-anchor="middle">1k</text><text x="620.5" y="304.7" text-anchor="middle">2k</text><text x="639.4" y="304.7" text-anchor="middle">3k</text><text x="663.3" y="304.7" text-anchor="middle">5k</text><text x="695.7" y="304.7" text-anchor="middle">10k</text><text x="728.1" y="304.7" text-anchor="middle">20k</text><text x="566.3" y="312.8" text-anchor="middle" font-size="7.8" textLength="49.8" lengthAdjust="spacingAndGlyphs">Frequency (Hz)</text><text transform="translate(384.3,159.3) rotate(-90)" text-anchor="middle" font-size="7.2" textLength="32.6" lengthAdjust="spacingAndGlyphs">Level (dBrA)</text><text x="566.5" y="25.6" text-anchor="middle" font-family='"Liberation Mono", monospace' font-size="6" font-weight="bold" fill="#333">FFT</text></g><rect x="369.2" y="319.8" width="2.2" height="2" fill="#9cc4cc"/><rect x="373.2" y="319.8" width="2.2" height="2" fill="#9cc4cc"/><rect x="377.4" y="319.8" width="2.2" height="2" fill="#9cc4cc"/><g font-family="Liberation Sans" font-size="8.1" fill="#1a1a1a"><rect x="3" y="325.1" width="9.7" height="9.8" fill="#1b3f50" /><rect x="3.9" y="330.2" width="8" height="1.6" fill="#f4f4f4" /><rect x="6.9" y="326.8" width="1.7" height="7.5" fill="#f4f4f4" /><text x="14.5" y="333" fill="#000" text-anchor="start" font-weight="normal" >Add Meter</text><path d="M58.5 330 h3 l-1.5 1.6z" fill="#222"/><rect x="69" y="325.3" width="10.3" height="9.7" fill="#1f4657" /><rect x="70.3" y="326.8" width="4.6" height="7" fill="#e8eef0"/><path d="M70.8 328.6 h3.4 M70.8 330.6 h3.4 M70.8 332.6 h3.4" stroke="#6a8a98" stroke-width="0.6"/><path d="M74.5 330.2 h2.4 v-1.6 l2.3 2.5 l-2.3 2.5 v-1.6 h-2.4z" fill="#f4f4f4"/><text x="81" y="333" fill="#000" text-anchor="start" font-weight="normal" >Save Meter Data</text><rect x="151.5" y="325.5" width="9.7" height="10.2" fill="#1f4657" /><path d="M154.3 327.5 v6.2 l5 -3.1z" fill="#fff"/><text x="163" y="333" fill="#000" text-anchor="start" font-weight="normal" >Regulate</text></g><circle cx="738.5" cy="329" r="1.4" fill="#2a5a9a"/><rect x="734" y="332" width="9" height="1" fill="#8aa0c0"/><rect x="3.5" y="340.3" width="361.2" height="16" fill="#dee5e8" /><rect x="3.5" y="356.3" width="361.2" height="83" fill="#dde4e7" /><rect x="3.5" y="355.8" width="361.2" height="0.8" fill="#cfd6d9" /><text x="6.5" y="351.6" font-size="9.2" fill="#0a0a0a" text-anchor="start" font-weight="bold" font-family="Liberation Sans" textLength="47.8" lengthAdjust="spacingAndGlyphs">RMS Level</text><rect x="59.2" y="340.6" width="47" height="15.5" fill="#ffffff" /><text x="61.7" y="351.3" font-size="8" fill="#222" text-anchor="start" font-weight="normal" font-family="Liberation Sans" >Vrms</text><path d="M100.7 347.8 h3 l-1.5 1.7z" fill="#111"/><rect x="107.5" y="343.40000000000003" width="10.6" height="9.6" fill="#27424f"/><rect x="108.5" y="345.00000000000006" width="8.6" height="1" fill="#f0f0f0"/><path d="M108.5 349.40000000000003 l2.5 -2.2 l2.5 1.8 l3 -2.2" stroke="#a8c0e0" stroke-width="1" fill="none"/><rect x="108.5" y="350.40000000000003" width="8.6" height="1" fill="#f0f0f0"/><path d="M119.1 347.40000000000003 h3 l-1.5 1.7z" fill="#111"/><rect x="126.7" y="343.40000000000003" width="9.6" height="9.31" fill="#1f3d4f"/><circle cx="131.50" cy="348.06" r="2.78" fill="#f2f4f4"/><rect x="130.55" y="344.31" width="1.9" height="2" fill="#f2f4f4" transform="rotate(30 131.50 348.06)"/><rect x="130.55" y="344.31" width="1.9" height="2" fill="#f2f4f4" transform="rotate(90 131.50 348.06)"/><rect x="130.55" y="344.31" width="1.9" height="2" fill="#f2f4f4" transform="rotate(150 131.50 348.06)"/><rect x="130.55" y="344.31" width="1.9" height="2" fill="#f2f4f4" transform="rotate(210 131.50 348.06)"/><rect x="130.55" y="344.31" width="1.9" height="2" fill="#f2f4f4" transform="rotate(270 131.50 348.06)"/><rect x="130.55" y="344.31" width="1.9" height="2" fill="#f2f4f4" transform="rotate(330 131.50 348.06)"/><circle cx="131.50" cy="348.06" r="1.25" fill="#1c3048"/><path d="M341.6 345.8 H338.7 V351.40000000000003 H345.1 V348.3" fill="none" stroke="#12307e" stroke-width="1.4"/><path d="M340.6 349.70000000000005 L344.2 346.20000000000005" stroke="#12307e" stroke-width="1.3"/><path d="M342.4 345.1 H345.8 V348.5z" fill="#12307e"/><g stroke="#1a2633" stroke-width="1.4"><path d="M353.8 345.8 l5.9 5.5"/><path d="M359.7 345.8 l-5.9 5.5"/></g><rect x="5.2" y="396.5" width="90.3" height="1.8" fill="#c4c8ca" /><text x="8.7" y="385.6" font-size="19.5" fill="#0c0c0c" text-anchor="start" font-weight="normal" font-family="Liberation Sans" textLength="32" lengthAdjust="spacingAndGlyphs" stroke="#dde4e7" stroke-width="0.22">Ch1</text><text x="8.7" y="424.6" font-size="19.5" fill="#0c0c0c" text-anchor="start" font-weight="normal" font-family="Liberation Sans" textLength="32" lengthAdjust="spacingAndGlyphs" stroke="#dde4e7" stroke-width="0.22">Ch2</text><path d="M88.0 375.3 h7 l-3.5 6.4z" fill="#000"/><path d="M88.0 415.3 h7 l-3.5 6.4z" fill="#000"/><rect x="96.1" y="359.3" width="262.5" height="76.4" fill="#000000" /><rect x="96.1" y="385.3" width="261.5" height="10" fill="#8c8c8c" /><rect x="96.1" y="389.3" width="261.5" height="2" fill="#000" /><rect x="96.1" y="385.3" width="182.26549999999997" height="4" fill="#00f000" /><rect x="96.1" y="391.3" width="182.26549999999997" height="4" fill="#00f000" /><rect x="96.1" y="398.90000000000003" width="261.5" height="10" fill="#8c8c8c" /><rect x="96.1" y="402.90000000000003" width="261.5" height="2" fill="#000" /><rect x="96.1" y="398.90000000000003" width="182.26549999999997" height="4" fill="#00f000" /><rect x="96.1" y="404.90000000000003" width="182.26549999999997" height="4" fill="#00f000" /><rect x="96.1" y="395.3" width="262.5" height="1" fill="#505050" /><rect x="96.1" y="396.3" width="262.5" height="2.6" fill="#c6c6c6" /><text x="286.0" y="379.90000000000003" font-size="19" fill="#1cf01c" text-anchor="end" font-weight="normal" font-family="Liberation Sans" >2.118</text><text x="355.0" y="379.90000000000003" font-size="19" fill="#1cf01c" text-anchor="end" font-weight="normal" font-family="Liberation Sans" >Vrms</text><text x="286.0" y="429.70000000000005" font-size="19" fill="#1cf01c" text-anchor="end" font-weight="normal" font-family="Liberation Sans" >2.119</text><text x="355.0" y="429.70000000000005" font-size="19" fill="#1cf01c" text-anchor="end" font-weight="normal" font-family="Liberation Sans" >Vrms</text><rect x="368" y="340.3" width="361.2" height="16" fill="#dee5e8" /><rect x="368" y="356.3" width="361.2" height="83" fill="#dde4e7" /><rect x="368" y="355.8" width="361.2" height="0.8" fill="#cfd6d9" /><text x="371" y="351.6" font-size="9.2" fill="#0a0a0a" text-anchor="start" font-weight="bold" font-family="Liberation Sans" textLength="61.8" lengthAdjust="spacingAndGlyphs">THD+N Ratio</text><rect x="438.6" y="340.6" width="47" height="15.5" fill="#ffffff" /><text x="441.1" y="351.3" font-size="8" fill="#222" text-anchor="start" font-weight="normal" font-family="Liberation Sans" >%</text><path d="M480.1 347.8 h3 l-1.5 1.7z" fill="#111"/><rect x="486.90000000000003" y="343.40000000000003" width="10.6" height="9.6" fill="#27424f"/><rect x="487.90000000000003" y="345.00000000000006" width="8.6" height="1" fill="#f0f0f0"/><path d="M487.90000000000003 349.40000000000003 l2.5 -2.2 l2.5 1.8 l3 -2.2" stroke="#a8c0e0" stroke-width="1" fill="none"/><rect x="487.90000000000003" y="350.40000000000003" width="8.6" height="1" fill="#f0f0f0"/><path d="M498.50000000000006 347.40000000000003 h3 l-1.5 1.7z" fill="#111"/><rect x="506.1" y="343.40000000000003" width="9.6" height="9.31" fill="#1f3d4f"/><circle cx="510.90" cy="348.06" r="2.78" fill="#f2f4f4"/><rect x="509.95" y="344.31" width="1.9" height="2" fill="#f2f4f4" transform="rotate(30 510.90 348.06)"/><rect x="509.95" y="344.31" width="1.9" height="2" fill="#f2f4f4" transform="rotate(90 510.90 348.06)"/><rect x="509.95" y="344.31" width="1.9" height="2" fill="#f2f4f4" transform="rotate(150 510.90 348.06)"/><rect x="509.95" y="344.31" width="1.9" height="2" fill="#f2f4f4" transform="rotate(210 510.90 348.06)"/><rect x="509.95" y="344.31" width="1.9" height="2" fill="#f2f4f4" transform="rotate(270 510.90 348.06)"/><rect x="509.95" y="344.31" width="1.9" height="2" fill="#f2f4f4" transform="rotate(330 510.90 348.06)"/><circle cx="510.90" cy="348.06" r="1.25" fill="#1c3048"/><path d="M706.1 345.8 H703.2 V351.40000000000003 H709.6 V348.3" fill="none" stroke="#12307e" stroke-width="1.4"/><path d="M705.1 349.70000000000005 L708.7 346.20000000000005" stroke="#12307e" stroke-width="1.3"/><path d="M706.9 345.1 H710.3 V348.5z" fill="#12307e"/><g stroke="#1a2633" stroke-width="1.4"><path d="M718.3 345.8 l5.9 5.5"/><path d="M724.2 345.8 l-5.9 5.5"/></g><rect x="369.7" y="396.5" width="90.3" height="1.8" fill="#c4c8ca" /><text x="373.2" y="385.6" font-size="19.5" fill="#0c0c0c" text-anchor="start" font-weight="normal" font-family="Liberation Sans" textLength="32" lengthAdjust="spacingAndGlyphs" stroke="#dde4e7" stroke-width="0.22">Ch1</text><text x="373.2" y="424.6" font-size="19.5" fill="#0c0c0c" text-anchor="start" font-weight="normal" font-family="Liberation Sans" textLength="32" lengthAdjust="spacingAndGlyphs" stroke="#dde4e7" stroke-width="0.22">Ch2</text><path d="M452.5 375.3 h7 l-3.5 6.4z" fill="#000"/><path d="M452.5 415.3 h7 l-3.5 6.4z" fill="#000"/><rect x="460.6" y="359.3" width="262.5" height="76.4" fill="#000000" /><rect x="460.6" y="385.3" width="261.5" height="10" fill="#8c8c8c" /><rect x="460.6" y="389.3" width="261.5" height="2" fill="#000" /><rect x="461.20000000000005" y="385.3" width="7.322" height="10" fill="#00f000" /><rect x="465.8" y="389.3" width="256.3" height="2" fill="#000" /><rect x="460.6" y="398.90000000000003" width="261.5" height="10" fill="#8c8c8c" /><rect x="460.6" y="402.90000000000003" width="261.5" height="2" fill="#000" /><rect x="461.20000000000005" y="398.90000000000003" width="7.322" height="10" fill="#00f000" /><rect x="465.8" y="402.90000000000003" width="256.3" height="2" fill="#000" /><rect x="460.6" y="395.3" width="262.5" height="1" fill="#505050" /><rect x="460.6" y="396.3" width="262.5" height="2.6" fill="#c6c6c6" /><text x="689.8" y="379.90000000000003" font-size="19" fill="#1cf01c" text-anchor="end" font-weight="normal" font-family="Liberation Sans" >0.000138</text><text x="720.5" y="379.90000000000003" font-size="19" fill="#1cf01c" text-anchor="end" font-weight="normal" font-family="Liberation Sans" >%</text><text x="689.8" y="429.70000000000005" font-size="19" fill="#1cf01c" text-anchor="end" font-weight="normal" font-family="Liberation Sans" >0.000141</text><text x="720.5" y="429.70000000000005" font-size="19" fill="#1cf01c" text-anchor="end" font-weight="normal" font-family="Liberation Sans" >%</text><rect x="3.5" y="442.8" width="361.2" height="16" fill="#dee5e8" /><rect x="3.5" y="458.8" width="361.2" height="83" fill="#dde4e7" /><rect x="3.5" y="458.3" width="361.2" height="0.8" fill="#cfd6d9" /><text x="6.5" y="454.1" font-size="9.2" fill="#0a0a0a" text-anchor="start" font-weight="bold" font-family="Liberation Sans" textLength="48.5" lengthAdjust="spacingAndGlyphs">Frequency</text><rect x="59.7" y="443.1" width="47" height="15.5" fill="#ffffff" /><text x="62.2" y="453.8" font-size="8" fill="#222" text-anchor="start" font-weight="normal" font-family="Liberation Sans" >Hz</text><path d="M101.2 450.3 h3 l-1.5 1.7z" fill="#111"/><rect x="108.0" y="445.90000000000003" width="10.6" height="9.6" fill="#27424f"/><rect x="109.0" y="447.50000000000006" width="8.6" height="1" fill="#f0f0f0"/><path d="M109.0 451.90000000000003 l2.5 -2.2 l2.5 1.8 l3 -2.2" stroke="#a8c0e0" stroke-width="1" fill="none"/><rect x="109.0" y="452.90000000000003" width="8.6" height="1" fill="#f0f0f0"/><path d="M119.6 449.90000000000003 h3 l-1.5 1.7z" fill="#111"/><rect x="127.2" y="445.90000000000003" width="9.6" height="9.31" fill="#1f3d4f"/><circle cx="132.00" cy="450.56" r="2.78" fill="#f2f4f4"/><rect x="131.05" y="446.81" width="1.9" height="2" fill="#f2f4f4" transform="rotate(30 132.00 450.56)"/><rect x="131.05" y="446.81" width="1.9" height="2" fill="#f2f4f4" transform="rotate(90 132.00 450.56)"/><rect x="131.05" y="446.81" width="1.9" height="2" fill="#f2f4f4" transform="rotate(150 132.00 450.56)"/><rect x="131.05" y="446.81" width="1.9" height="2" fill="#f2f4f4" transform="rotate(210 132.00 450.56)"/><rect x="131.05" y="446.81" width="1.9" height="2" fill="#f2f4f4" transform="rotate(270 132.00 450.56)"/><rect x="131.05" y="446.81" width="1.9" height="2" fill="#f2f4f4" transform="rotate(330 132.00 450.56)"/><circle cx="132.00" cy="450.56" r="1.25" fill="#1c3048"/><path d="M341.6 448.3 H338.7 V453.90000000000003 H345.1 V450.8" fill="none" stroke="#12307e" stroke-width="1.4"/><path d="M340.6 452.20000000000005 L344.2 448.70000000000005" stroke="#12307e" stroke-width="1.3"/><path d="M342.4 447.6 H345.8 V451.0z" fill="#12307e"/><g stroke="#1a2633" stroke-width="1.4"><path d="M353.8 448.3 l5.9 5.5"/><path d="M359.7 448.3 l-5.9 5.5"/></g><rect x="5.2" y="499.0" width="90.3" height="1.8" fill="#c4c8ca" /><text x="8.7" y="488.1" font-size="19.5" fill="#0c0c0c" text-anchor="start" font-weight="normal" font-family="Liberation Sans" textLength="32" lengthAdjust="spacingAndGlyphs" stroke="#dde4e7" stroke-width="0.22">Ch1</text><text x="8.7" y="527.1" font-size="19.5" fill="#0c0c0c" text-anchor="start" font-weight="normal" font-family="Liberation Sans" textLength="32" lengthAdjust="spacingAndGlyphs" stroke="#dde4e7" stroke-width="0.22">Ch2</text><path d="M88.0 477.8 h7 l-3.5 6.4z" fill="#000"/><path d="M88.0 517.8 h7 l-3.5 6.4z" fill="#000"/><rect x="96.1" y="461.8" width="262.5" height="76.4" fill="#000000" /><rect x="96.1" y="487.8" width="261.5" height="10" fill="#8c8c8c" /><rect x="96.1" y="491.8" width="261.5" height="2" fill="#000" /><rect x="96.1" y="487.8" width="149.05499999999998" height="4" fill="#00f000" /><rect x="96.1" y="493.8" width="149.05499999999998" height="4" fill="#00f000" /><rect x="96.1" y="501.40000000000003" width="261.5" height="10" fill="#8c8c8c" /><rect x="96.1" y="505.40000000000003" width="261.5" height="2" fill="#000" /><rect x="96.1" y="501.40000000000003" width="149.05499999999998" height="4" fill="#00f000" /><rect x="96.1" y="507.40000000000003" width="149.05499999999998" height="4" fill="#00f000" /><rect x="96.1" y="497.8" width="262.5" height="1" fill="#505050" /><rect x="96.1" y="498.8" width="262.5" height="2.6" fill="#c6c6c6" /><text x="302.5" y="482.40000000000003" font-size="19" fill="#1cf01c" text-anchor="end" font-weight="normal" font-family="Liberation Sans" >0.99999</text><text x="357.0" y="482.40000000000003" font-size="19" fill="#1cf01c" text-anchor="end" font-weight="normal" font-family="Liberation Sans" >kHz</text><text x="302.5" y="532.2" font-size="19" fill="#1cf01c" text-anchor="end" font-weight="normal" font-family="Liberation Sans" >0.99999</text><text x="357.0" y="532.2" font-size="19" fill="#1cf01c" text-anchor="end" font-weight="normal" font-family="Liberation Sans" >kHz</text><rect x="368" y="442.8" width="361.2" height="16" fill="#dee5e8" /><rect x="368" y="458.8" width="361.2" height="83" fill="#dde4e7" /><rect x="368" y="458.3" width="361.2" height="0.8" fill="#cfd6d9" /><text x="371" y="454.1" font-size="9.2" fill="#0a0a0a" text-anchor="start" font-weight="bold" font-family="Liberation Sans" textLength="32.2" lengthAdjust="spacingAndGlyphs">SINAD</text><rect x="405.8" y="443.1" width="47" height="15.5" fill="#ffffff" /><text x="408.3" y="453.8" font-size="8" fill="#222" text-anchor="start" font-weight="normal" font-family="Liberation Sans" >dB</text><path d="M447.3 450.3 h3 l-1.5 1.7z" fill="#111"/><rect x="454.1" y="445.90000000000003" width="10.6" height="9.6" fill="#27424f"/><rect x="455.1" y="447.50000000000006" width="8.6" height="1" fill="#f0f0f0"/><path d="M455.1 451.90000000000003 l2.5 -2.2 l2.5 1.8 l3 -2.2" stroke="#a8c0e0" stroke-width="1" fill="none"/><rect x="455.1" y="452.90000000000003" width="8.6" height="1" fill="#f0f0f0"/><path d="M465.70000000000005 449.90000000000003 h3 l-1.5 1.7z" fill="#111"/><rect x="473.3" y="445.90000000000003" width="9.6" height="9.31" fill="#1f3d4f"/><circle cx="478.10" cy="450.56" r="2.78" fill="#f2f4f4"/><rect x="477.15" y="446.81" width="1.9" height="2" fill="#f2f4f4" transform="rotate(30 478.10 450.56)"/><rect x="477.15" y="446.81" width="1.9" height="2" fill="#f2f4f4" transform="rotate(90 478.10 450.56)"/><rect x="477.15" y="446.81" width="1.9" height="2" fill="#f2f4f4" transform="rotate(150 478.10 450.56)"/><rect x="477.15" y="446.81" width="1.9" height="2" fill="#f2f4f4" transform="rotate(210 478.10 450.56)"/><rect x="477.15" y="446.81" width="1.9" height="2" fill="#f2f4f4" transform="rotate(270 478.10 450.56)"/><rect x="477.15" y="446.81" width="1.9" height="2" fill="#f2f4f4" transform="rotate(330 478.10 450.56)"/><circle cx="478.10" cy="450.56" r="1.25" fill="#1c3048"/><path d="M706.1 448.3 H703.2 V453.90000000000003 H709.6 V450.8" fill="none" stroke="#12307e" stroke-width="1.4"/><path d="M705.1 452.20000000000005 L708.7 448.70000000000005" stroke="#12307e" stroke-width="1.3"/><path d="M706.9 447.6 H710.3 V451.0z" fill="#12307e"/><g stroke="#1a2633" stroke-width="1.4"><path d="M718.3 448.3 l5.9 5.5"/><path d="M724.2 448.3 l-5.9 5.5"/></g><rect x="369.7" y="499.0" width="90.3" height="1.8" fill="#c4c8ca" /><text x="373.2" y="488.1" font-size="19.5" fill="#0c0c0c" text-anchor="start" font-weight="normal" font-family="Liberation Sans" textLength="32" lengthAdjust="spacingAndGlyphs" stroke="#dde4e7" stroke-width="0.22">Ch1</text><text x="373.2" y="527.1" font-size="19.5" fill="#0c0c0c" text-anchor="start" font-weight="normal" font-family="Liberation Sans" textLength="32" lengthAdjust="spacingAndGlyphs" stroke="#dde4e7" stroke-width="0.22">Ch2</text><path d="M452.5 477.8 h7 l-3.5 6.4z" fill="#000"/><path d="M452.5 517.8 h7 l-3.5 6.4z" fill="#000"/><rect x="460.6" y="461.8" width="262.5" height="76.4" fill="#000000" /><rect x="460.6" y="487.8" width="261.5" height="10" fill="#8c8c8c" /><rect x="460.6" y="491.8" width="261.5" height="2" fill="#000" /><rect x="460.6" y="487.8" width="256.27" height="4" fill="#00f000" /><rect x="460.6" y="493.8" width="256.27" height="4" fill="#00f000" /><rect x="460.6" y="501.40000000000003" width="261.5" height="10" fill="#8c8c8c" /><rect x="460.6" y="505.40000000000003" width="261.5" height="2" fill="#000" /><rect x="460.6" y="501.40000000000003" width="256.27" height="4" fill="#00f000" /><rect x="460.6" y="507.40000000000003" width="256.27" height="4" fill="#00f000" /><rect x="460.6" y="497.8" width="262.5" height="1" fill="#505050" /><rect x="460.6" y="498.8" width="262.5" height="2.6" fill="#c6c6c6" /><text x="679.8" y="482.40000000000003" font-size="19" fill="#1cf01c" text-anchor="end" font-weight="normal" font-family="Liberation Sans" >117.223</text><text x="720.5" y="482.40000000000003" font-size="19" fill="#1cf01c" text-anchor="end" font-weight="normal" font-family="Liberation Sans" >dB</text><text x="679.8" y="532.2" font-size="19" fill="#1cf01c" text-anchor="end" font-weight="normal" font-family="Liberation Sans" >117.027</text><text x="720.5" y="532.2" font-size="19" fill="#1cf01c" text-anchor="end" font-weight="normal" font-family="Liberation Sans" >dB</text><rect x="736" y="340.3" width="10" height="202" fill="#f0f0f0" /><rect x="736" y="358" width="10" height="114" fill="#d4d4d4" /><path d="M738.5 346.5 l2.5 -2.5 l2.5 2.5" stroke="#333" stroke-width="1.2" fill="none"/><path d="M738.5 537 l2.5 2.5 l2.5 -2.5" stroke="#333" stroke-width="1.2" fill="none"/><g font-family="Liberation Sans"><text x="231.2" y="554.2" font-size="8" fill="#222" text-anchor="start" font-weight="normal" textLength="27.2" lengthAdjust="spacingAndGlyphs">Output:</text><rect x="262.7" y="546.3" width="148.2" height="10.4" fill="#000" /><text x="265.7" y="554.2" font-size="8.8" fill="#12c012" text-anchor="start" font-weight="bold" font-family="Liberation Sans" textLength="142.7" lengthAdjust="spacingAndGlyphs">ASIO: Topping USB Audio Device 2 Chs</text><rect x="412.3" y="546.3" width="50.19999999999999" height="10.4" fill="#000" /><text x="415.3" y="554.2" font-size="8.8" fill="#12c012" text-anchor="start" font-weight="bold" font-family="Liberation Sans" textLength="44.7" lengthAdjust="spacingAndGlyphs">44.1000 kHz</text><text x="466.5" y="554.2" font-size="8" fill="#222" text-anchor="start" font-weight="normal" textLength="20.8" lengthAdjust="spacingAndGlyphs">Input:</text><rect x="491.3" y="546.3" width="135.99999999999994" height="10.4" fill="#000" /><text x="494.3" y="554.2" font-size="8.8" fill="#12c012" text-anchor="start" font-weight="bold" font-family="Liberation Sans" textLength="130.5" lengthAdjust="spacingAndGlyphs">Analog Unbalanced 2 Ch, 100 kohm</text><rect x="629.2" y="546.3" width="46.09999999999991" height="10.4" fill="#000" /><text x="632.2" y="554.2" font-size="8.8" fill="#12c012" text-anchor="start" font-weight="bold" font-family="Liberation Sans" textLength="40.6" lengthAdjust="spacingAndGlyphs">2.500 Vrms</text><rect x="677.2" y="546.3" width="58.09999999999991" height="10.4" fill="#000" /><text x="680.2" y="554.2" font-size="8.8" fill="#12c012" text-anchor="start" font-weight="bold" font-family="Liberation Sans" textLength="52.6" lengthAdjust="spacingAndGlyphs">20 Hz - 20 kHz</text></g>
</svg></body></html>
